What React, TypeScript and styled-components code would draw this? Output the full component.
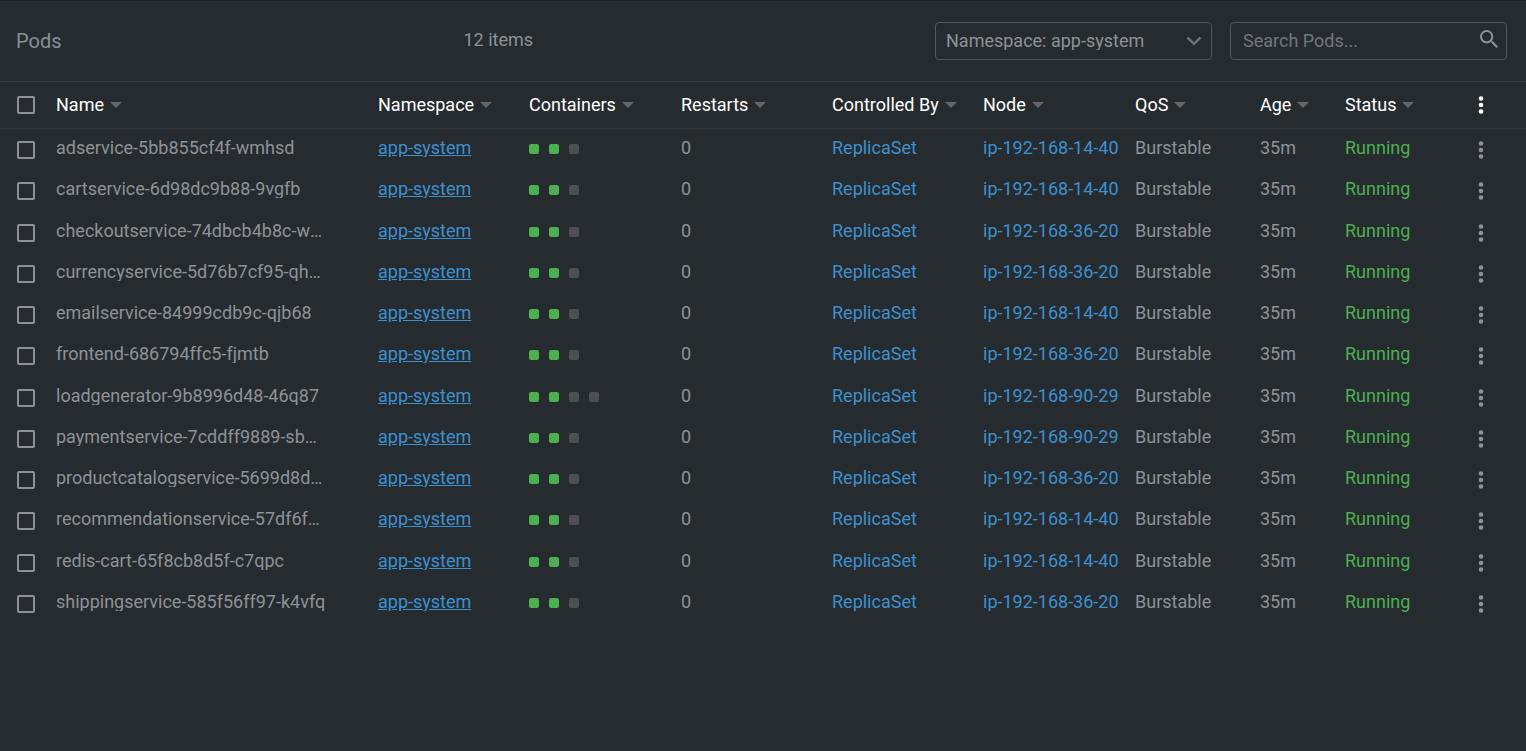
import React from "react";
import styled, { createGlobalStyle } from "styled-components";

const GlobalStyle = createGlobalStyle`
  *, *::before, *::after { box-sizing: border-box; }
  html, body { margin: 0; }
  body {
    background: #262b2f;
    color: #8e9297;
    font-family: Roboto, "Liberation Sans", sans-serif;
    font-size: 18px;
    line-height: 18px;
  }
  button, input, select { font: inherit; color: inherit; }
`;

const Page = styled.main`
  min-height: 100vh;
  border-top: 1px solid #1e2125;
`;

const Toolbar = styled.header`
  display: flex;
  align-items: center;
  gap: 18px;
  height: 81px;
  padding: 0 19px 0 16px;
  border-bottom: 1px solid #36393e;
`;

const Title = styled.h1`
  margin: 0;
  font-size: 20px;
  line-height: 24px;
  font-weight: 400;
  color: #87909c;
`;

const ItemCount = styled.div`
  flex: 1;
  padding-bottom: 2px;
  text-align: center;
`;

const Field = styled.div`
  display: flex;
  align-items: center;
  width: 277px;
  height: 38px;
  border: 1px solid #52575c;
  border-radius: 4px;
`;

const fieldControl = `
  flex: 1;
  min-width: 0;
  height: 100%;
  border: 0;
  outline: 0;
  background: transparent;
`;

const NamespaceSelect = styled.select`
  ${fieldControl}
  appearance: none;
  padding: 0 36px 0 10px;
  margin-right: -34px;
  option { background: #262b2f; }
`;

const SearchInput = styled.input`
  ${fieldControl}
  padding: 0 12px 2px;
  &::placeholder { color: #72767d; opacity: 1; }
`;

const FieldIcon = styled.svg`
  flex: none;
  margin-right: 9px;
  pointer-events: none;
`;

const SearchIcon = styled(FieldIcon)`
  margin-right: 8px;
  margin-bottom: 4px;
`;

const PodTable = styled.table`
  width: 100%;
  table-layout: fixed;
  border-collapse: separate;
  border-spacing: 0;
`;

const HeadCell = styled.th`
  height: 47px;
  padding: 0;
  border-bottom: 1px solid #36393e;
  text-align: left;
  font-weight: 400;
  color: #ffffff;
`;

const SortButton = styled.button`
  display: flex;
  align-items: center;
  gap: 6px;
  padding: 0;
  border: 0;
  background: none;
  white-space: nowrap;
  cursor: pointer;
`;

const Row = styled.tr`
  height: 41px;
  &:nth-child(4n + 2) { height: 42px; }
`;

const Cell = styled.td`
  padding: 0;
`;

const CellText = styled.div<{ $running?: boolean }>`
  margin-bottom: 4px;
  white-space: nowrap;
  color: ${(p) => (p.$running ? "#4caf50" : "inherit")};
`;

const ClippedText = styled(CellText)<{ $wide?: boolean }>`
  margin-right: ${(p) => (p.$wide ? 52 : 16)}px;
  overflow: hidden;
  text-overflow: ellipsis;
`;

const Link = styled.a<{ $underline?: boolean }>`
  color: #3d90ce;
  text-decoration: ${(p) => (p.$underline ? "underline" : "none")};
`;

const Checkbox = styled.input`
  display: block;
  appearance: none;
  width: 18px;
  height: 18px;
  margin: 0 0 0 17px;
  border: 2px solid #8e9297;
  border-radius: 2px;
  &:checked { background: #3d90ce; }
`;

const Bricks = styled.div`
  display: flex;
  gap: 10px;
  margin-bottom: 2px;
`;

const Brick = styled.span<{ $on: boolean }>`
  width: 10px;
  height: 10px;
  border-radius: 2px;
  background: ${(p) => (p.$on ? "#4caf50" : "#4c5053")};
`;

const MenuButton = styled.button<{ $head?: boolean }>`
  display: flex;
  margin: 0 auto;
  padding: 0 8px;
  border: 0;
  background: none;
  color: ${(p) => (p.$head ? "#ffffff" : "#8e9297")};
  cursor: pointer;
`;

const SortArrow = () => (
  <svg width="12" height="6" viewBox="0 0 12 6" aria-hidden="true">
    <path d="M0 0h12L6 6z" fill="#63676b" />
  </svg>
);

const KebabIcon = () => (
  <svg width="6" height="20" viewBox="0 0 6 20" fill="currentColor" aria-hidden="true">
    <circle cx="3" cy="3.5" r="2.3" />
    <circle cx="3" cy="10" r="2.3" />
    <circle cx="3" cy="16.5" r="2.3" />
  </svg>
);

const columns = [
  { label: "Name", width: 322 },
  { label: "Namespace", width: 151 },
  { label: "Containers", width: 152 },
  { label: "Restarts", width: 151 },
  { label: "Controlled By", width: 151 },
  { label: "Node", width: 152 },
  { label: "QoS", width: 125 },
  { label: "Age", width: 85 },
  { label: "Status", width: 91 },
];

const pods = [
  { name: "adservice-5bb855cf4f-wmhsd", node: "ip-192-168-14-40", idle: 1 },
  { name: "cartservice-6d98dc9b88-9vgfb", node: "ip-192-168-14-40", idle: 1 },
  { name: "checkoutservice-74dbcb4b8c-w7xkp", node: "ip-192-168-36-20", idle: 1 },
  { name: "currencyservice-5d76b7cf95-qhw2z", node: "ip-192-168-36-20", idle: 1 },
  { name: "emailservice-84999cdb9c-qjb68", node: "ip-192-168-14-40", idle: 1 },
  { name: "frontend-686794ffc5-fjmtb", node: "ip-192-168-36-20", idle: 1 },
  { name: "loadgenerator-9b8996d48-46q87", node: "ip-192-168-90-29", idle: 2 },
  { name: "paymentservice-7cddff9889-sbmx4", node: "ip-192-168-90-29", idle: 1 },
  { name: "productcatalogservice-5699d8d6b-t5lq", node: "ip-192-168-36-20", idle: 1 },
  { name: "recommendationservice-57df6f5c9-n8rv", node: "ip-192-168-14-40", idle: 1 },
  { name: "redis-cart-65f8cb8d5f-c7qpc", node: "ip-192-168-14-40", idle: 1 },
  { name: "shippingservice-585f56ff97-k4vfq", node: "ip-192-168-36-20", idle: 1 },
];

export default function App() {
  return (
    <Page>
      <GlobalStyle />
      <Toolbar>
        <Title>Pods</Title>
        <ItemCount>12 items</ItemCount>
        <Field>
          <NamespaceSelect aria-label="Namespace filter">
            <option>Namespace: app-system</option>
          </NamespaceSelect>
          <FieldIcon width="16" height="10" viewBox="0 0 16 10" aria-hidden="true">
            <path d="M1.5 1.5L8 8l6.500-6.500" fill="none" stroke="#6b6f74" strokeWidth="2.500" />
          </FieldIcon>
        </Field>
        <Field>
          <SearchInput type="text" placeholder="Search Pods..." aria-label="Search Pods" />
          <SearchIcon width="18" height="18" viewBox="3 3 17.500 17.500" aria-hidden="true">
            <path
              fill="#8e9297"
              d="M15.500 14h-.79l-.28-.27A6.470 6.470 0 0 0 16 9.500 6.500 6.500 0 1 0 9.500 16c1.610 0 3.090-.59 4.230-1.570l.27.28v.79l5 4.990L20.490 19l-4.990-5zm-6 0C7.010 14 5 11.990 5 9.500S7.010 5 9.500 5 14 7.010 14 9.500 11.990 14 9.500 14z"
            />
          </SearchIcon>
        </Field>
      </Toolbar>
      <PodTable>
        <colgroup>
          <col width={56} />
          {columns.map((c) => (
            <col key={c.label} width={c.width} />
          ))}
          <col width={90} />
        </colgroup>
        <thead>
          <tr>
            <HeadCell>
              <Checkbox type="checkbox" aria-label="Select all pods" />
            </HeadCell>
            {columns.map((c) => (
              <HeadCell key={c.label} scope="col">
                <SortButton type="button">
                  {c.label}
                  <SortArrow />
                </SortButton>
              </HeadCell>
            ))}
            <HeadCell>
              <MenuButton $head type="button" aria-label="Choose columns">
                <KebabIcon />
              </MenuButton>
            </HeadCell>
          </tr>
        </thead>
        <tbody>
          {pods.map((pod) => (
            <Row key={pod.name}>
              <Cell>
                <Checkbox type="checkbox" aria-label={`Select ${pod.name}`} />
              </Cell>
              <Cell>
                <ClippedText $wide>{pod.name}</ClippedText>
              </Cell>
              <Cell>
                <ClippedText>
                  <Link $underline href="#app-system">app-system</Link>
                </ClippedText>
              </Cell>
              <Cell>
                <Bricks>
                  <Brick $on />
                  <Brick $on />
                  {Array.from({ length: pod.idle }, (_, i) => (
                    <Brick key={i} $on={false} />
                  ))}
                </Bricks>
              </Cell>
              <Cell>
                <CellText>0</CellText>
              </Cell>
              <Cell>
                <ClippedText>
                  <Link href="#replicaset">ReplicaSet</Link>
                </ClippedText>
              </Cell>
              <Cell>
                <ClippedText>
                  <Link href={`#${pod.node}`}>{pod.node}</Link>
                </ClippedText>
              </Cell>
              <Cell>
                <CellText>Burstable</CellText>
              </Cell>
              <Cell>
                <CellText>35m</CellText>
              </Cell>
              <Cell>
                <CellText $running>Running</CellText>
              </Cell>
              <Cell>
                <MenuButton type="button" aria-label={`Actions for ${pod.name}`}>
                  <KebabIcon />
                </MenuButton>
              </Cell>
            </Row>
          ))}
        </tbody>
      </PodTable>
    </Page>
  );
}
